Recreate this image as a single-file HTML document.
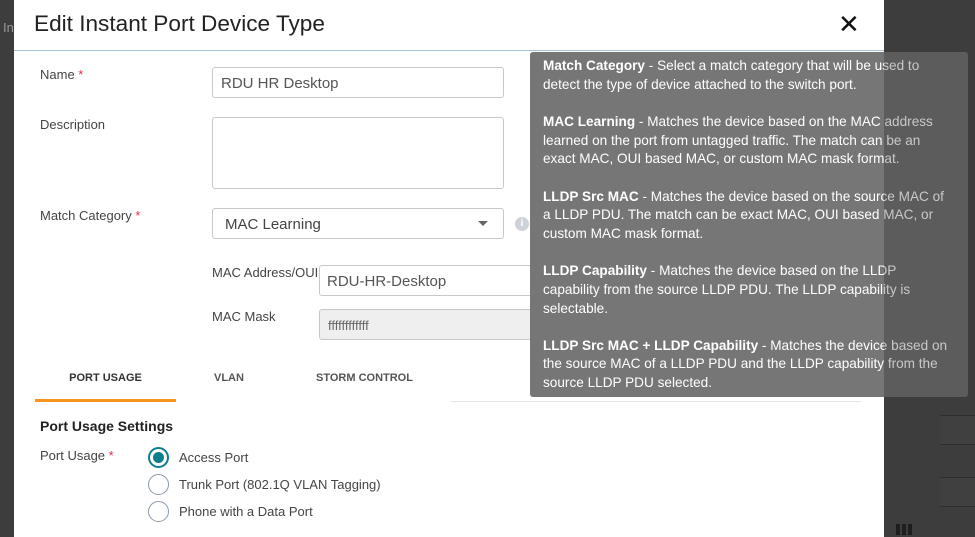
<!DOCTYPE html>
<html><head><meta charset="utf-8"><style>
*{box-sizing:border-box;margin:0;padding:0}
body{width:975px;height:537px;overflow:hidden;background:#3d3d3d;font-family:"Liberation Sans",sans-serif;position:relative;color:#333}
.abs{position:absolute}
.modal{left:14px;top:0;width:870px;height:537px;background:#fff}
.lbl{font-size:13px;color:#444}
.req{color:#e0304a}
.inp{border:1px solid #c8c8c8;border-radius:3px;background:#fff;font-size:15px;color:#555;padding-left:8px;line-height:31px}
.tip{left:530px;top:52px;width:438px;height:345px;background:#767676;border-radius:3px;color:#fff;font-size:13.6px;line-height:18.7px;padding:5px 12px 5px 13px;white-space:nowrap}
.tip p{margin-bottom:18.5px}
.radio{width:21px;height:21px;border:1.5px solid #8c9aa8;border-radius:50%}
</style></head><body>
<div class="abs lbl" style="left:3px;top:20px;color:#999;font-size:13px">In</div>
<div class="abs modal"></div>
<div class="abs" style="left:34px;top:11px;font-size:22.6px;color:#222">Edit Instant Port Device Type</div>
<div class="abs" style="left:838px;top:9px;font-size:26px;color:#111;font-weight:300">✕</div>
<div class="abs" style="left:14px;top:50px;width:870px;height:1px;background:#a9c3d6"></div>

<div class="abs lbl" style="left:40px;top:67px">Name <span class="req">*</span></div>
<div class="abs inp" style="left:212px;top:67px;width:292px;height:31px">RDU HR Desktop</div>
<div class="abs lbl" style="left:40px;top:117px">Description</div>
<div class="abs inp" style="left:212px;top:117px;width:292px;height:72px"></div>
<div class="abs lbl" style="left:40px;top:208px">Match Category <span class="req">*</span></div>
<div class="abs inp" style="left:212px;top:208px;width:292px;height:31px;padding-left:12px;color:#444">MAC Learning</div>
<div class="abs" style="left:478px;top:221px;border-left:5px solid transparent;border-right:5px solid transparent;border-top:5px solid #666"></div>
<div class="abs" style="left:515px;top:217px;width:14px;height:14px;border-radius:50%;background:#cdd3d9;color:#fff;font-size:10px;text-align:center;line-height:14px;font-weight:bold">i</div>
<div class="abs lbl" style="left:212px;top:265px">MAC Address/OUI</div>
<div class="abs inp" style="left:319px;top:265px;width:230px;height:31px;padding-left:7px">RDU-HR-Desktop</div>
<div class="abs lbl" style="left:212px;top:309px">MAC Mask</div>
<div class="abs inp" style="left:319px;top:309px;width:230px;height:31px;background:#efefef;font-size:13px;color:#666">ffffffffffff</div>

<div class="abs" style="left:35px;top:372px;width:141px;text-align:center;font-size:11px;font-weight:bold;color:#333">PORT USAGE</div>
<div class="abs" style="left:214px;top:372px;font-size:11px;font-weight:bold;color:#555">VLAN</div>
<div class="abs" style="left:316px;top:372px;font-size:11px;font-weight:bold;color:#555">STORM CONTROL</div>
<div class="abs" style="left:35px;top:399px;width:141px;height:3px;background:#f7941d"></div>
<div class="abs" style="left:451px;top:401px;width:410px;height:1px;background:#e6e6e6"></div>
<div class="abs" style="left:40px;top:418px;font-size:14px;font-weight:bold;color:#222">Port Usage Settings</div>
<div class="abs lbl" style="left:40px;top:448px">Port Usage <span class="req">*</span></div>
<div class="abs radio" style="left:148px;top:447px;border:2px solid #0d7f8c;padding:3px"><div style="width:11px;height:11px;border-radius:50%;background:#0d7f8c"></div></div>
<div class="abs radio" style="left:148px;top:474px"></div>
<div class="abs radio" style="left:148px;top:501px"></div>
<div class="abs lbl" style="left:179px;top:450px">Access Port</div>
<div class="abs lbl" style="left:179px;top:477px">Trunk Port (802.1Q VLAN Tagging)</div>
<div class="abs lbl" style="left:179px;top:504px">Phone with a Data Port</div>

<div class="abs" style="left:940px;top:415px;width:35px;height:30px;border-top:1px solid #2e2e2e;border-bottom:1px solid #2e2e2e;background:#404040"></div>
<div class="abs" style="left:940px;top:477px;width:35px;height:30px;border-top:1px solid #2e2e2e;border-bottom:1px solid #2e2e2e;background:#404040"></div>
<div class="abs" style="left:896px;top:524px;width:17px;height:11px;background:repeating-linear-gradient(90deg,#1e1e1e 0 4px,#3d3d3d 4px 6px)"></div>

<div class="abs tip">
<p><b>Match Category</b> - Select a match category that will be used to<br>detect the type of device attached to the switch port.</p>
<p><b>MAC Learning</b> - Matches the device based on the MAC address<br>learned on the port from untagged traffic. The match can be an<br>exact MAC, OUI based MAC, or custom MAC mask format.</p>
<p><b>LLDP Src MAC</b> - Matches the device based on the source MAC of<br>a LLDP PDU. The match can be exact MAC, OUI based MAC, or<br>custom MAC mask format.</p>
<p><b>LLDP Capability</b> - Matches the device based on the LLDP<br>capability from the source LLDP PDU. The LLDP capability is<br>selectable.</p>
<p><b>LLDP Src MAC + LLDP Capability</b> - Matches the device based on<br>the source MAC of a LLDP PDU and the LLDP capability from the<br>source LLDP PDU selected.</p>
</div>
<div class="abs" style="left:884px;top:52px;width:84px;height:345px;background:rgba(0,0,0,0.22);border-radius:0 3px 3px 0"></div>
</body></html>
